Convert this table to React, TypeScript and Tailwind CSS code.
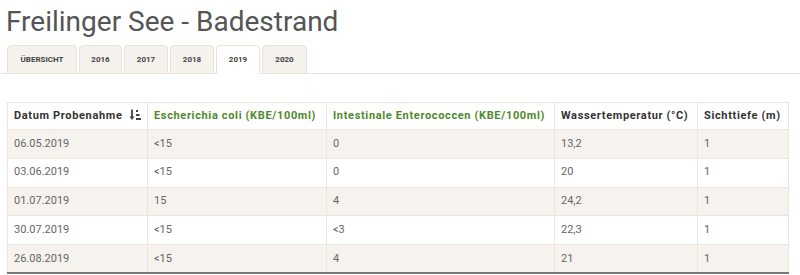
import React from 'react';

const tabs = ['ÜBERSICHT', '2016', '2017', '2018', '2019', '2020'];
const tabWidths = ['w-[70px]', 'w-[43px]', 'w-[44px]', 'w-[44px]', 'w-[44px]', 'w-[45px]'];

const rows = [
  ['06.05.2019', '<15', '0', '13,2', '1'],
  ['03.06.2019', '<15', '0', '20', '1'],
  ['01.07.2019', '15', '4', '24,2', '1'],
  ['30.07.2019', '<15', '<3', '22,3', '1'],
  ['26.08.2019', '<15', '4', '21', '1'],
];

function SortIcon() {
  return (
    <svg width="12" height="12" viewBox="0 0 12 12" className="inline-block ml-[6px] -mt-[2px]">
      <path d="M3 0.5V9" stroke="#444" strokeWidth="1.8" />
      <path d="M0.5 7.5L3 11L5.5 7.5Z" fill="#444" />
      <rect x="7" y="1" width="2" height="2" fill="#444" />
      <rect x="7" y="5" width="3.5" height="2" fill="#444" />
      <rect x="7" y="9" width="5" height="2" fill="#444" />
    </svg>
  );
}

export default function App() {
  return (
    <div className="w-[800px] h-[275px] bg-white overflow-hidden font-['Roboto',sans-serif]">
      <h1 className="pl-[6px] pt-[4px] text-[28px] leading-[36px] text-[#555]">Freilinger See - Badestrand</h1>

      <div className="mt-[5px] flex gap-[2px] pl-[7px] border-b border-[#e8e2d8]">
        {tabs.map((t, i) => (
          <div
            key={t}
            className={`${tabWidths[i]} h-[29px] -mb-px flex items-center justify-center rounded-t-[4px] border border-[#e8e2d8] text-[8px] font-bold text-[#444] ${
              t === '2019' ? 'bg-white border-b-white' : 'bg-[#f5f2ed]'
            }`}
          >
            {t}
          </div>
        ))}
      </div>

      <table className="ml-[7px] mt-[28px] w-[782px] border-collapse text-[11px] border-b-2 border-b-[#777]">
        <thead>
          <tr className="h-[27px] bg-white tracking-[0.65px]">
            <th className="w-[140px] border border-[#ebe5db] pl-[6px] text-left font-bold text-[#333]">
              Datum Probenahme<SortIcon />
            </th>
            <th className="w-[179px] border border-[#ebe5db] pl-[6px] text-left font-bold text-[#4c8a2b]">Escherichia coli (KBE/100ml)</th>
            <th className="w-[228px] border border-[#ebe5db] pl-[6px] text-left font-bold text-[#4c8a2b]">Intestinale Enterococcen (KBE/100ml)</th>
            <th className="w-[143px] border border-[#ebe5db] pl-[6px] text-left font-bold text-[#333]">Wassertemperatur (°C)</th>
            <th className="border border-[#ebe5db] pl-[6px] text-left font-bold text-[#333]">Sichttiefe (m)</th>
          </tr>
        </thead>
        <tbody>
          {rows.map((r, i) => (
            <tr key={r[0]} className={`h-[28.8px] ${i % 2 === 0 ? 'bg-[#f6f3ee]' : 'bg-white'}`}>
              {r.map((c, j) => (
                <td key={j} className="border border-[#ebe5db] pl-[6px] text-[#666]">
                  {c}
                </td>
              ))}
            </tr>
          ))}
        </tbody>
      </table>
    </div>
  );
}
